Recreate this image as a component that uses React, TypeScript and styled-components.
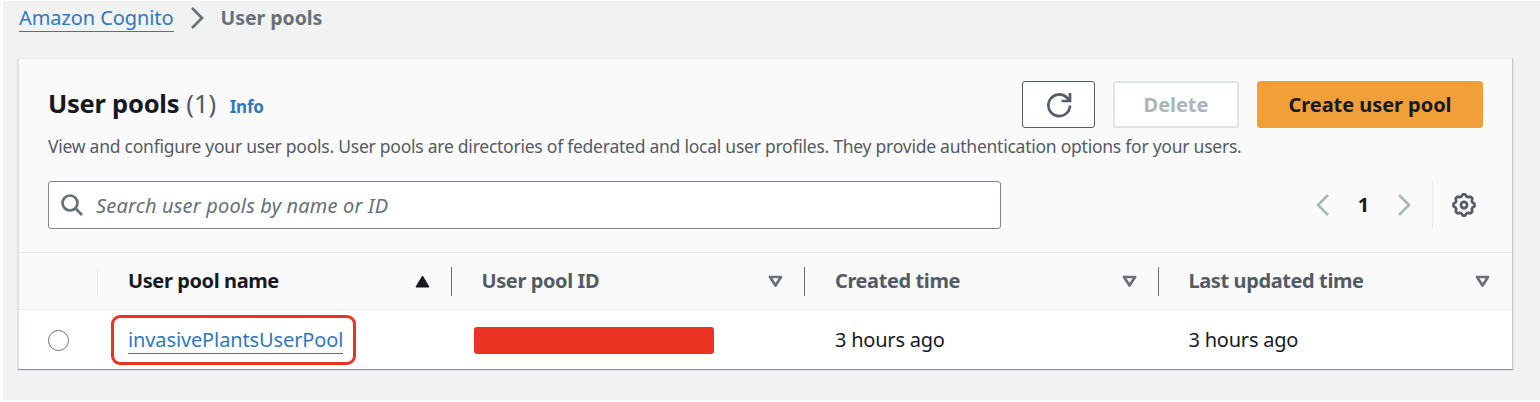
import React from "react";
import styled, { createGlobalStyle } from "styled-components";

const GlobalStyle = createGlobalStyle`
  * { box-sizing: border-box; }
  body {
    margin: 0;
    background: #fdfdfd;
    font-family: "Noto Sans", "Open Sans", sans-serif;
    color: #16191f;
  }
`;

const Page = styled.main`
  margin: 1px 0 0 3px;
  height: 399px;
  padding: 0 27px 0 15px;
  background: #f1f3f3;
`;

const Breadcrumbs = styled.nav`
  display: flex;
  align-items: flex-start;
  height: 57px;
  padding: 4px 0 0 1px;
  line-height: 26px;
`;

const Link = styled.a<{ $spacing: number }>`
  display: inline-block;
  height: 27px;
  border-bottom: 1px solid #3277bd;
  color: #3277bd;
  font-size: 20px;
  letter-spacing: ${(p) => p.$spacing}px;
  line-height: 26px;
  white-space: nowrap;
  text-decoration: none;
`;

const CrumbArrow = styled.svg`
  width: 14px;
  height: 24px;
  margin: 1px 17px 0 16px;
`;

const CurrentCrumb = styled.span`
  color: #687078;
  font-size: 19.5px;
  font-weight: 700;
  letter-spacing: -0.05px;
`;

const Card = styled.section`
  width: 1495px;
  height: 311px;
  border: 1px solid #dfe2e2;
  border-top-color: #eaeded;
  border-right-color: #c5cacd;
  border-bottom: 0;
  background: #fff;
  box-shadow: 0 1px 1px #8b9599;
`;

const CardHeader = styled.header`
  height: 194px;
  padding: 22px 29px 0 29px;
  background: #fafafa;
  border-bottom: 1px solid #eaeded;
`;

const TitleRow = styled.div`
  display: flex;
  justify-content: space-between;
  height: 47px;
`;

const Heading = styled.div`
  display: flex;
  align-items: baseline;
  line-height: 44px;
`;

const Title = styled.h1`
  margin: 0;
  font-size: 25.5px;
  font-weight: 700;
  letter-spacing: -0.25px;
`;

const Count = styled.span`
  margin-left: 7px;
  color: #545b64;
  font-size: 25.5px;
`;

const Info = styled.a`
  margin-left: 13.5px;
  color: #3277bd;
  font-size: 17px;
  font-weight: 700;
  letter-spacing: -0.2px;
`;

const Actions = styled.div`
  display: flex;
  gap: 18px;
`;

const Button = styled.button<{ $kind: "normal" | "disabled" | "primary"; $width: number }>`
  display: flex;
  align-items: center;
  justify-content: center;
  width: ${(p) => p.$width}px;
  height: 47px;
  padding: 0;
  border: ${(p) => (p.$kind === "disabled" ? 2 : 1.5)}px solid
    ${(p) => ({ normal: "#545b64", disabled: "#dfe4e4", primary: "#f19f39" })[p.$kind]};
  border-radius: 3px;
  background: ${(p) => (p.$kind === "primary" ? "#f19f39" : "#fff")};
  color: ${(p) => (p.$kind === "disabled" ? "#aab7b8" : "#16191f")};
  font: 700 20px/26px "Noto Sans", "Open Sans", sans-serif;
  letter-spacing: -0.05px;
`;

const Description = styled.p`
  margin: 6px 0 0;
  color: #545b64;
  font-size: 17.5px;
  line-height: 24px;
  letter-spacing: -0.245px;
  white-space: nowrap;
`;

const Tools = styled.div`
  display: flex;
  justify-content: space-between;
  margin-top: 23px;
`;

const SearchBox = styled.div`
  display: flex;
  align-items: center;
  gap: 13px;
  width: 953px;
  height: 48px;
  padding-left: 12px;
  border: 1.5px solid #7d868c;
  border-radius: 3px;
  background: #fff;
  color: #687078;
  font-size: 20px;
  font-style: italic;
  letter-spacing: 0.17px;
`;

const Pager = styled.div`
  display: flex;
  align-items: center;
  height: 47px;
  font-size: 20px;
  font-weight: 700;
`;

const PageNumber = styled.span`
  width: 67px;
  text-align: center;
`;

const Preferences = styled.div`
  display: flex;
  align-items: center;
  height: 47px;
  margin-left: 21px;
  padding: 0 7px 0 19px;
  border-left: 1.5px solid #eaeded;
`;

const Row = styled.div<{ $head?: boolean }>`
  display: grid;
  grid-template-columns: 78px repeat(4, 353.5px);
  height: ${(p) => (p.$head ? 57 : 59)}px;
  align-items: center;
  background: ${(p) => (p.$head ? "#fafafa" : "#fff")};
  border-bottom: ${(p) => (p.$head ? "1.5px solid #eaeded" : "0")};
`;

const HeadCell = styled.div<{ $active?: boolean; $divider: string }>`
  display: flex;
  align-items: center;
  justify-content: space-between;
  height: 29px;
  padding: 0 21px 0 30px;
  border-left: 1.5px solid ${(p) => p.$divider};
  color: ${(p) => (p.$active ? "#16191f" : "#545b64")};
  font-size: 20px;
  font-weight: 700;
  letter-spacing: -0.4px;
  line-height: 26px;
  white-space: nowrap;
`;

const Cell = styled.div`
  display: flex;
  align-items: center;
  height: 59px;
  padding-left: 31px;
  font-size: 20px;
  letter-spacing: -0.22px;
  white-space: nowrap;
`;

const Radio = styled.span`
  width: 21px;
  height: 21px;
  margin: 1px 0 0 29px;
  border: 1.5px solid #687078;
  border-radius: 50%;
`;

const Highlight = styled.div`
  flex: none;
  width: 245px;
  height: 50px;
  margin-left: -17px;
  padding: 8px 0 0 14px;
  border: 3px solid #ea3323;
  border-radius: 9px;
`;

const Redaction = styled.div`
  width: 240px;
  height: 27px;
  margin: 2px 0 0 -8px;
  border-radius: 3px;
  background: #ea3323;
`;

const Sort = ({ filled }: { filled?: boolean }) =>
  filled ? (
    <svg width="15" height="13" viewBox="0 0 15 13">
      <path d="M7.5 1 14 12H1z" fill="#16191f" stroke="#16191f" strokeLinejoin="round" />
    </svg>
  ) : (
    <svg width="15" height="13" viewBox="0 0 15 13">
      <path d="M2 2h11L7.500 10.500z" fill="none" stroke="#687078" strokeWidth="2.700" strokeLinejoin="round" />
    </svg>
  );

const Chevron = ({ left }: { left?: boolean }) => (
  <svg width="14" height="24" viewBox="0 0 14 24">
    <path
      d={left ? "M12 2 2 12l10 10" : "M2 2l10 10L2 22"}
      fill="none"
      stroke="#aab7b8"
      strokeWidth="2.600"
    />
  </svg>
);

const gearPath = (() => {
  const points: string[] = [];
  for (let i = 0; i <= 96; i++) {
    const a = (i / 96) * Math.PI * 2;
    const wave = Math.max(-1, Math.min(1, Math.cos(a * 8) * 1.8));
    const r = 9.7 + wave * 0.85;
    points.push(`${(12 + r * Math.sin(a)).toFixed(2)} ${(12 - r * Math.cos(a)).toFixed(2)}`);
  }
  return `M${points.join("L")}Z`;
})();

const Gear = () => (
  <svg width="24" height="24" viewBox="0 0 24 24" fill="none" stroke="#545b64" strokeWidth="2.700">
    <path d={gearPath} strokeLinejoin="round" />
    <circle cx="12" cy="12" r="3.100" />
  </svg>
);

const Refresh = () => (
  <svg width="26" height="26" viewBox="0 0 26 26" fill="none" stroke="#545b64" strokeWidth="2.700">
    <path d="M24 13.500A10.800 10.800 0 1 1 21 5.800L23.500 8.500" />
    <path d="M24 1V9H15.500" />
  </svg>
);

const SearchIcon = () => (
  <svg width="22" height="22" viewBox="0 0 22 22" fill="none" stroke="#687078" strokeWidth="2.700">
    <circle cx="9" cy="9" r="7.500" />
    <path d="M14.300 14.300 21 21" />
  </svg>
);

const columns = ["User pool name", "User pool ID", "Created time", "Last updated time"];

export default function App() {
  return (
    <>
      <GlobalStyle />
      <Page>
        <Breadcrumbs>
          <Link $spacing={-0.08}>Amazon Cognito</Link>
          <CrumbArrow viewBox="0 0 14 24">
            <path d="M2 2l10 10L2 22" fill="none" stroke="#687078" strokeWidth="2.700" />
          </CrumbArrow>
          <CurrentCrumb>User pools</CurrentCrumb>
        </Breadcrumbs>
        <Card>
          <CardHeader>
            <TitleRow>
              <Heading>
                <Title>User pools</Title>
                <Count>(1)</Count>
                <Info>Info</Info>
              </Heading>
              <Actions>
                <Button $kind="normal" $width={73} aria-label="Refresh"><Refresh /></Button>
                <Button $kind="disabled" $width={126}>Delete</Button>
                <Button $kind="primary" $width={226}>Create user pool</Button>
              </Actions>
            </TitleRow>
            <Description>
              View and configure your user pools. User pools are directories of federated and local user profiles. They provide authentication options for your users.
            </Description>
            <Tools>
              <SearchBox><SearchIcon />Search user pools by name or ID</SearchBox>
              <Pager>
                <Chevron left />
                <PageNumber>1</PageNumber>
                <Chevron />
                <Preferences><Gear /></Preferences>
              </Pager>
            </Tools>
          </CardHeader>
          <Row $head>
            <span />
            {columns.map((name, i) => (
              <HeadCell key={name} $active={i === 0} $divider={i === 0 ? "#eaeded" : "#687078"}>
                {name}
                <Sort filled={i === 0} />
              </HeadCell>
            ))}
          </Row>
          <Row>
            <Radio />
            <Cell>
              <Highlight>
                <Link $spacing={-0.12}>invasivePlantsUserPool</Link>
              </Highlight>
            </Cell>
            <Cell><Redaction /></Cell>
            <Cell>3 hours ago</Cell>
            <Cell>3 hours ago</Cell>
          </Row>
        </Card>
      </Page>
    </>
  );
}
